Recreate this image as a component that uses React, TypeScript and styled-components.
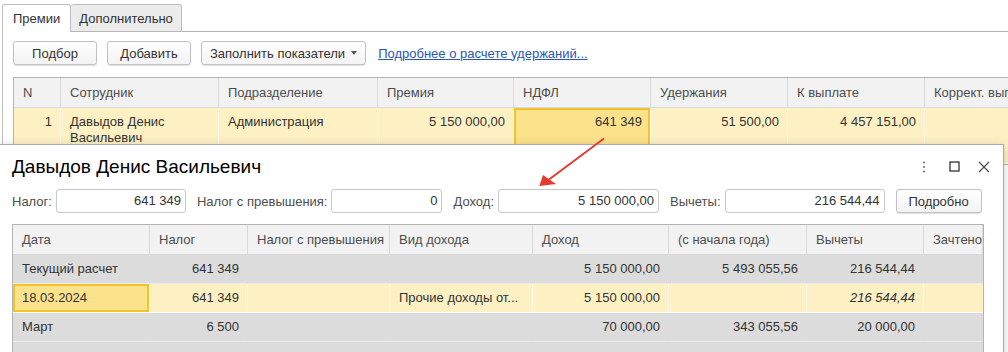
import styled, { createGlobalStyle } from 'styled-components'

const GlobalStyle = createGlobalStyle`
  html, body {
    margin: 0;
    padding: 0;
    background: #fff;
  }
  body {
    font-family: 'Liberation Sans', Arial, sans-serif;
    font-size: 13px;
    color: #333;
  }
  * {
    box-sizing: border-box;
  }
`

type Align = 'left' | 'right'
type Tone = 'current' | 'group'

const mainColumns = [47, 158, 159, 136, 137, 137, 137, 220]
const detailColumns = [137, 98, 142, 143, 136, 138, 117, 59]

const Screen = styled.div`
  position: relative;
  width: 1008px;
  height: 352px;
  overflow: hidden;
  background: #fff;
`

const TabStrip = styled.div`
  display: flex;
  align-items: flex-end;
  height: 32px;
  padding-left: 2px;
`

const Tab = styled.div<{ $active?: boolean }>`
  height: 28px;
  line-height: 27px;
  padding: ${(p) => (p.$active ? '0 10px' : '0 8px')};
  color: #333;
  border: 1px solid #bdbdbd;
  border-left: ${(p) => (p.$active ? '1px solid #bdbdbd' : 'none')};
  border-bottom: ${(p) => (p.$active ? 'none' : '1px solid #b5b5b5')};
  border-radius: 3px 3px 0 0;
  background: ${(p) => (p.$active ? '#fff' : '#ececec')};
`

const TabFiller = styled.div`
  flex: 1;
  border-bottom: 1px solid #b5b5b5;
`

const Panel = styled.div`
  margin-left: 2px;
  height: 320px;
  border-left: 1px solid #bdbdbd;
  padding: 9px 0 0 10px;
`

const Toolbar = styled.div`
  display: flex;
  align-items: center;
  gap: 10px;
  height: 24px;
`

const Button = styled.button<{ $width?: number; $compact?: boolean }>`
  display: flex;
  align-items: center;
  justify-content: center;
  gap: 6px;
  height: 24px;
  min-width: ${(p) => p.$width ?? 84}px;
  padding: ${(p) => (p.$compact ? '0 8px' : '0 12px')};
  font-family: inherit;
  font-size: 13px;
  color: #333;
  background: linear-gradient(#ffffff, #f3f3f3);
  border: 1px solid #c2c2c2;
  border-radius: 3px;
  box-shadow: 0 1px 1px rgba(0, 0, 0, 0.12);
`

const Caret = styled.span`
  width: 0;
  height: 0;
  border-left: 3px solid transparent;
  border-right: 3px solid transparent;
  border-top: 4px solid #555;
`

const Link = styled.a`
  margin-left: 2px;
  color: #2a56b5;
  text-decoration: underline;
  white-space: nowrap;
`

const Grid = styled.div<{ $cols: number[] }>`
  display: grid;
  grid-template-columns: ${(p) => p.$cols.map((c) => `${c}px`).join(' ')};
  border: 1px solid #b4b4b4;
  width: max-content;
`

const MainGrid = styled(Grid)`
  margin-top: 12px;
`

const HeadCell = styled.div`
  height: 30px;
  line-height: 29px;
  padding: 0 9px;
  background: #f2f2f2;
  color: #4d4d4d;
  border-right: 1px solid #dadada;
  border-bottom: 1px solid #dadada;
  white-space: nowrap;
  overflow: hidden;

  &:last-child {
    border-right: none;
  }
`

const toneBg: Record<Tone, string> = {
  current: '#fdf1c4',
  group: '#dcdcdc',
}

const toneLine: Record<Tone, string> = {
  current: '#fffaf0',
  group: '#dcdcdc',
}

const Cell = styled.div<{
  $align?: Align
  $tone: Tone
  $selected?: boolean
  $italic?: boolean
  $height: number
}>`
  height: ${(p) => p.$height}px;
  padding: ${(p) => (p.$height > 40 ? '6px 8px 0 9px' : '0 8px 0 9px')};
  line-height: ${(p) => (p.$height > 40 ? '16px' : `${p.$height - 1}px`)};
  text-align: ${(p) => p.$align ?? 'left'};
  font-style: ${(p) => (p.$italic ? 'italic' : 'normal')};
  background: ${(p) => (p.$selected ? '#fde28c' : toneBg[p.$tone])};
  box-shadow: ${(p) => (p.$selected ? 'inset 0 0 0 2px #f6c22c' : 'none')};
  border-right: 1px solid ${(p) => toneLine[p.$tone]};
  border-bottom: 1px solid ${(p) => (p.$tone === 'current' ? '#ffffff' : '#ebebeb')};
  color: #333;
  overflow: hidden;
  white-space: ${(p) => (p.$height > 40 ? 'normal' : 'nowrap')};

  &:nth-child(8n) {
    border-right: none;
  }
`

const Window = styled.div`
  position: absolute;
  left: -1px;
  top: 144px;
  width: 1005px;
  height: 220px;
  background: #fff;
  border: 1px solid #a8a8a8;
  box-shadow: 0 2px 10px rgba(0, 0, 0, 0.18);
  padding-left: 12px;
`

const WindowHeader = styled.div`
  display: flex;
  align-items: center;
  justify-content: space-between;
  height: 43px;
  padding-right: 4px;
`

const Title = styled.h1`
  margin: 0;
  font-size: 19px;
  font-weight: normal;
  color: #000;
`

const WindowActions = styled.div`
  display: flex;
  align-items: center;
`

const IconButton = styled.span`
  display: flex;
  align-items: center;
  justify-content: center;
  width: 30px;
  height: 20px;
`

const FieldsRow = styled.div`
  display: flex;
  align-items: center;
  gap: 11px;
  height: 26px;
`

const Field = styled.label`
  display: flex;
  align-items: center;
  gap: 4px;
  color: #4d4d4d;
  white-space: nowrap;
`

const Input = styled.div<{ $width: number }>`
  width: ${(p) => p.$width}px;
  height: 24px;
  line-height: 22px;
  padding-right: 4px;
  text-align: right;
  color: #333;
  border: 1px solid #c8c8c8;
  border-radius: 3px;
  background: #fff;
`

const DetailGrid = styled(Grid)`
  margin-top: 10px;
`

const Pointer = styled.svg`
  position: absolute;
  left: 530px;
  top: 130px;
  width: 85px;
  height: 65px;
  pointer-events: none;
`

type DetailRow = {
  tone: Tone
  cells: { text: string; align?: Align; selected?: boolean; italic?: boolean }[]
}

const detailHead = [
  'Дата',
  'Налог',
  'Налог с превышения',
  'Вид дохода',
  'Доход',
  '(с начала года)',
  'Вычеты',
  'Зачтено',
]

const detailRows: DetailRow[] = [
  {
    tone: 'group',
    cells: [
      { text: 'Текущий расчет' },
      { text: '641 349', align: 'right' },
      { text: '' },
      { text: '' },
      { text: '5 150 000,00', align: 'right' },
      { text: '5 493 055,56', align: 'right' },
      { text: '216 544,44', align: 'right' },
      { text: '' },
    ],
  },
  {
    tone: 'current',
    cells: [
      { text: '18.03.2024', selected: true },
      { text: '641 349', align: 'right' },
      { text: '' },
      { text: 'Прочие доходы от...' },
      { text: '5 150 000,00', align: 'right' },
      { text: '' },
      { text: '216 544,44', align: 'right', italic: true },
      { text: '' },
    ],
  },
  {
    tone: 'group',
    cells: [
      { text: 'Март' },
      { text: '6 500', align: 'right' },
      { text: '' },
      { text: '' },
      { text: '70 000,00', align: 'right' },
      { text: '343 055,56', align: 'right' },
      { text: '20 000,00', align: 'right' },
      { text: '' },
    ],
  },
  {
    tone: 'group',
    cells: [
      { text: '' },
      { text: '' },
      { text: '' },
      { text: '' },
      { text: '' },
      { text: '' },
      { text: '' },
      { text: '' },
    ],
  },
]

const mainHead = [
  'N',
  'Сотрудник',
  'Подразделение',
  'Премия',
  'НДФЛ',
  'Удержания',
  'К выплате',
  'Коррект. выплаты',
]

function App() {
  return (
    <Screen>
      <GlobalStyle />

      <TabStrip>
        <Tab $active>Премии</Tab>
        <Tab>Дополнительно</Tab>
        <TabFiller />
      </TabStrip>

      <Panel>
        <Toolbar>
          <Button>Подбор</Button>
          <Button>Добавить</Button>
          <Button $compact>
            Заполнить показатели
            <Caret />
          </Button>
          <Link>Подробнее о расчете удержаний...</Link>
        </Toolbar>

        <MainGrid $cols={mainColumns}>
          {mainHead.map((h) => (
            <HeadCell key={h}>{h}</HeadCell>
          ))}
          <Cell $tone="current" $height={56} $align="right">1</Cell>
          <Cell $tone="current" $height={56}>Давыдов Денис Васильевич</Cell>
          <Cell $tone="current" $height={56}>Администрация</Cell>
          <Cell $tone="current" $height={56} $align="right">5 150 000,00</Cell>
          <Cell $tone="current" $height={56} $align="right" $selected>641 349</Cell>
          <Cell $tone="current" $height={56} $align="right">51 500,00</Cell>
          <Cell $tone="current" $height={56} $align="right">4 457 151,00</Cell>
          <Cell $tone="current" $height={56} />
        </MainGrid>
      </Panel>

      <Window>
        <WindowHeader>
          <Title>Давыдов Денис Васильевич</Title>
          <WindowActions>
            <IconButton>
              <svg width="4" height="12" viewBox="0 0 4 12">
                <circle cx="2" cy="1.5" r="1.1" fill="#777" />
                <circle cx="2" cy="6" r="1.1" fill="#777" />
                <circle cx="2" cy="10.5" r="1.1" fill="#777" />
              </svg>
            </IconButton>
            <IconButton>
              <svg width="11" height="11" viewBox="0 0 11 11">
                <rect x="1" y="1" width="9" height="9" fill="none" stroke="#222" strokeWidth="1.2" />
              </svg>
            </IconButton>
            <IconButton>
              <svg width="12" height="12" viewBox="0 0 12 12">
                <path d="M1 1 L11 11 M11 1 L1 11" stroke="#444" strokeWidth="1.1" fill="none" />
              </svg>
            </IconButton>
          </WindowActions>
        </WindowHeader>

        <FieldsRow>
          <Field>
            Налог:
            <Input $width={130}>641 349</Input>
          </Field>
          <Field>
            Налог с превышения:
            <Input $width={111}>0</Input>
          </Field>
          <Field>
            Доход:
            <Input $width={161}>5 150 000,00</Input>
          </Field>
          <Field>
            Вычеты:
            <Input $width={160}>216 544,44</Input>
          </Field>
          <Button $width={86}>Подробно</Button>
        </FieldsRow>

        <DetailGrid $cols={detailColumns}>
          {detailHead.map((h) => (
            <HeadCell key={h}>{h}</HeadCell>
          ))}
          {detailRows.map((row, i) =>
            row.cells.map((c, j) => (
              <Cell
                key={`${i}-${j}`}
                $tone={row.tone}
                $height={29}
                $align={c.align}
                $selected={c.selected}
                $italic={c.italic}
              >
                {c.text}
              </Cell>
            ))
          )}
        </DetailGrid>
      </Window>

      <Pointer viewBox="0 0 85 65">
        <line x1="74" y1="8.5" x2="19" y2="49.5" stroke="#e53b30" strokeWidth="2" />
        <polygon points="9.3,56 13,45 26,54" fill="#e53b30" />
      </Pointer>
    </Screen>
  )
}

export default App
